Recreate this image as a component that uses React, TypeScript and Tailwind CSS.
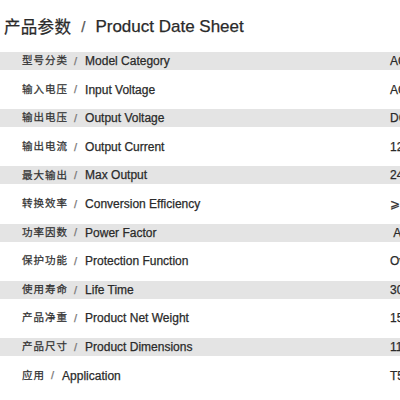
const rows = [
  { zh: "型号分类", en: "Model Category", value: "AC-DC" },
  { zh: "输入电压", en: "Input Voltage", value: "AC100-240V" },
  { zh: "输出电压", en: "Output Voltage", value: "DC12V" },
  { zh: "输出电流", en: "Output Current", value: "12.5A" },
  { zh: "最大输出", en: "Max Output", value: "240W" },
  { zh: "转换效率", en: "Conversion Efficiency", value: "⩾90%" },
  { zh: "功率因数", en: "Power Factor", value: "\u00a0Active PFC" },
  { zh: "保护功能", en: "Protection Function", value: "Over Voltage" },
  { zh: "使用寿命", en: "Life Time", value: "30000 hours" },
  { zh: "产品净重", en: "Product Net Weight", value: "150g" },
  { zh: "产品尺寸", en: "Product Dimensions", value: "110*50*30mm" },
  { zh: "应用", en: "Application", value: "T5 LED" },
]

export default function App() {
  return (
    <div
      className="w-[400px] h-[400px] overflow-hidden bg-white text-[#2a2a2a] [-webkit-text-stroke:0.25px_currentColor]"
      style={{ fontFamily: '"Liberation Sans", Arial, "Noto Sans CJK SC", sans-serif' }}
    >
      {/* Header */}
      <div className="h-[52px] flex items-center pl-[4px] pt-[2px]">
        <span className="text-[16.5px] tracking-[0.3px]">产品参数</span>
        <span className="text-[15px] text-[#555] ml-[10px] mr-[10px]">/</span>
        <span className="text-[17px]">Product Date Sheet</span>
      </div>

      {/* Spec rows */}
      <div className="flex flex-col">
        {rows.map((r, i) => (
          <div
            key={r.en}
            className={`flex items-center whitespace-nowrap ${
              i % 2 === 0 ? "h-[18px] bg-[#e4e4e4]" : "h-[39.2px]"
            }`}
          >
            <div className="w-[390px] shrink-0 flex items-center pl-[22px]">
              <span className="text-[10.5px] tracking-[1px] text-[#333]">{r.zh}</span>
              <span className="text-[11px] text-[#777] ml-[6px] mr-[8px]">/</span>
              <span className="text-[12px]">{r.en}</span>
            </div>
            <span className="text-[12px]">{r.value}</span>
          </div>
        ))}
      </div>
    </div>
  )
}
